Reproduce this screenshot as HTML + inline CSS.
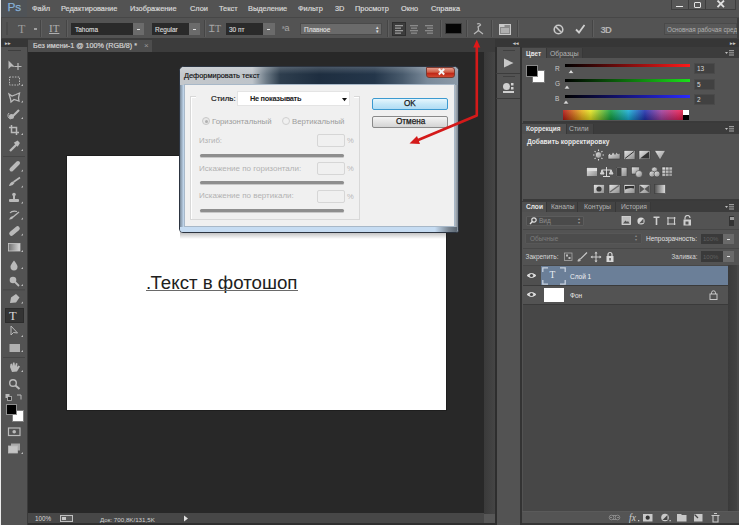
<!DOCTYPE html>
<html><head><meta charset="utf-8">
<style>
*{margin:0;padding:0;box-sizing:border-box}
html,body{width:739px;height:525px;overflow:hidden;background:#535353;font-family:"Liberation Sans",sans-serif}
.a{position:absolute}
.t{position:absolute;white-space:nowrap;line-height:1}
.mn{color:#d8d8d8;font-size:7.4px;top:5px;-webkit-text-stroke:0.2px #d8d8d8}
.sep{position:absolute;top:20px;width:2px;height:17px;border-left:1px solid #454545;border-right:1px solid #5e5e5e}
.box{position:absolute;top:23px;height:12px;background:#2a2a2a}
.btn{position:absolute;top:23px;height:12px;width:11px;background:#6b6b6b}
.btn:after{content:"";position:absolute;left:4px;top:6px;width:3px;height:1px;background:#e0e0e0}
.ot{color:#d8d8d8;font-size:6.5px;top:27px;-webkit-text-stroke:0.15px #d8d8d8}
.ic{position:absolute}
</style></head><body>
<!-- left edge -->
<div class="a" style="left:0;top:0;width:1px;height:525px;background:#ececec"></div>
<!-- menu bar -->
<div class="a" style="left:1px;top:0;width:738px;height:17px;background:#535353"></div>
<div class="a" style="left:1px;top:0;width:26px;height:17px;background:#4f5357"></div>
<div class="t" style="left:7.5px;top:1.5px;font-size:11.8px;color:#86b0d8;-webkit-text-stroke:0.25px #86b0d8;letter-spacing:0px">Ps</div>
<div class="t mn" style="left:32px">Файл</div>
<div class="t mn" style="left:61px">Редактирование</div>
<div class="t mn" style="left:130px">Изображение</div>
<div class="t mn" style="left:190px">Слои</div>
<div class="t mn" style="left:219px">Текст</div>
<div class="t mn" style="left:248px">Выделение</div>
<div class="t mn" style="left:298px">Фильтр</div>
<div class="t mn" style="left:335px">3D</div>
<div class="t mn" style="left:355px">Просмотр</div>
<div class="t mn" style="left:401px">Окно</div>
<div class="t mn" style="left:431px">Справка</div>
<!-- window buttons -->
<div class="a" style="left:671px;top:0;width:65px;height:9.5px;background:#575757;border:1px solid #3e3e3e;border-top:0"></div>
<div class="a" style="left:688px;top:0;width:1px;height:9px;background:#3e3e3e"></div>
<div class="a" style="left:705px;top:0;width:1px;height:9px;background:#3e3e3e"></div>
<div class="a" style="left:676px;top:5.5px;width:7px;height:1.8px;background:#e8e8e8"></div>
<div class="a" style="left:694px;top:2px;width:7px;height:5.5px;border:1.6px solid #e4e4e4;border-radius:1px"></div>
<svg class="ic" style="left:716px;top:0" width="10" height="9"><path d="M1.5 0.5 L8 7.2 M8 0.5 L1.5 7.2" stroke="#e0e0e0" stroke-width="1.8"/></svg>
<!-- options bar -->
<div class="a" style="left:1px;top:17px;width:738px;height:22px;background:#535353;border-top:1px solid #474747;border-bottom:1px solid #3c3c3c;border-left:1px solid #474747"></div>
<div class="a" style="left:6px;top:22px;width:2px;height:13px;background:#4a4a4a"></div>
<div class="t" style="left:18px;top:23px;font-family:'Liberation Serif';font-size:12px;color:#9c9c9c">T</div>
<div class="a" style="left:34px;top:28px;width:3px;height:1.5px;background:#a0a0a0"></div>
<div class="sep" style="left:40px"></div>
<div class="t" style="left:49px;top:23px;font-family:'Liberation Serif';font-size:11px;color:#b0b0b0;text-decoration:underline">IT</div>
<div class="sep" style="left:66px"></div>
<div class="box" style="left:71px;width:62px"></div><div class="t ot" style="left:75px">Tahoma</div>
<div class="btn" style="left:133px"></div>
<div class="box" style="left:152px;width:37px"></div><div class="t ot" style="left:155px">Regular</div>
<div class="btn" style="left:189px"></div>
<div class="sep" style="left:204px"></div>
<div class="t" style="left:209px;top:24px;font-family:'Liberation Serif';font-size:10px;color:#a8a8a8">ꞮT</div>
<div class="box" style="left:226px;width:37px"></div><div class="t ot" style="left:229px">30 пт</div>
<div class="btn" style="left:263px;width:12px"></div>
<div class="t" style="left:282px;top:24px;font-size:7px;color:#a8a8a8">ª<span style="font-size:9px">a</span></div>
<div class="box" style="left:300px;width:82px;background:#6a6a6a;border:1px solid #4a4a4a"></div><div class="t ot" style="left:304px;color:#e0e0e0">Плавное</div>
<div class="t" style="left:376px;top:25px;font-size:5px;color:#e0e0e0;line-height:4px">▴<br>▾</div>
<div class="sep" style="left:387px"></div>
<div class="a" style="left:392px;top:22px;width:14px;height:14px;background:#3c3c3c;border:1px solid #2e2e2e"></div>
<svg class="ic" style="left:395px;top:25px" width="9" height="9"><g fill="#9a9a9a"><rect x="0" y="0" width="8" height="1.3"/><rect x="0" y="2.5" width="6" height="1.3"/><rect x="0" y="5" width="8" height="1.3"/><rect x="0" y="7.5" width="6" height="1.3"/></g></svg>
<svg class="ic" style="left:410px;top:25px" width="9" height="9"><g fill="#8a8a8a"><rect x="0" y="0" width="8" height="1.3"/><rect x="1" y="2.5" width="6" height="1.3"/><rect x="0" y="5" width="8" height="1.3"/><rect x="1" y="7.5" width="6" height="1.3"/></g></svg>
<svg class="ic" style="left:425px;top:25px" width="9" height="9"><g fill="#8a8a8a"><rect x="0" y="0" width="8" height="1.3"/><rect x="2" y="2.5" width="6" height="1.3"/><rect x="0" y="5" width="8" height="1.3"/><rect x="2" y="7.5" width="6" height="1.3"/></g></svg>
<div class="sep" style="left:440px"></div>
<div class="a" style="left:445px;top:23px;width:17px;height:11px;background:#050505;border:1px solid #3c3c3c"></div>
<div class="sep" style="left:466px"></div>
<svg class="ic" style="left:473px;top:23px" width="11" height="12"><path d="M4 1 Q7 0 7.5 2 L5 4 Q6 6 5 8" stroke="#b8b8b8" stroke-width="1.3" fill="none"/><path d="M1 11 L5.5 7.5 L10 11" stroke="#b8b8b8" stroke-width="1.2" fill="none"/></svg>
<div class="sep" style="left:491px"></div>
<svg class="ic" style="left:499px;top:24px" width="12" height="11"><rect x="0.5" y="0.5" width="11" height="10" fill="#8a8a8a" stroke="#c8c8c8"/><rect x="0.5" y="0.5" width="5" height="2.5" fill="#c8c8c8"/><rect x="2" y="4" width="8" height="5" fill="#b0b0b0"/></svg>
<div class="sep" style="left:517px"></div>
<svg class="ic" style="left:553px;top:24px" width="11" height="11"><circle cx="5.5" cy="5.5" r="4.3" stroke="#c8c8c8" stroke-width="1.6" fill="none"/><path d="M2.5 2.5 L8.5 8.5" stroke="#c8c8c8" stroke-width="1.6"/></svg>
<svg class="ic" style="left:575px;top:24px" width="10" height="10"><path d="M1 5.5 L4 8.5 L9.5 1" stroke="#d0d0d0" stroke-width="1.8" fill="none"/></svg>
<div class="sep" style="left:592px"></div>
<div class="t" style="left:600.5px;top:24.5px;font-size:9.5px;font-weight:bold;color:#b4b4b4;letter-spacing:-0.8px">3D</div>
<div class="a" style="left:664px;top:23px;width:73px;height:12px;background:#585858;border:1px solid #4a4a4a"></div>
<div class="t" style="left:667px;top:26.5px;font-size:6.3px;color:#b0b0b0">Основная рабочая сред</div>
<div class="a" style="left:737px;top:18px;width:2px;height:29px;background:#3e3e3e"></div>
<!-- doc tab bar -->
<div class="a" style="left:28px;top:39px;width:467px;height:13px;background:#3c3c3c"></div>
<div class="a" style="left:28px;top:40px;width:124px;height:12px;background:#4d4d4d"></div>
<div class="t" style="left:33px;top:42px;font-size:7.2px;color:#d4d4d4;-webkit-text-stroke:0.2px #d4d4d4">Без имени-1 @ 100% (RGB/8) *</div>
<div class="t" style="left:144px;top:42px;font-size:8px;color:#9a9a9a">×</div>
<!-- doc area -->
<div class="a" style="left:28px;top:52px;width:456px;height:462px;background:#282828"></div>
<!-- status bar -->
<div class="a" style="left:28px;top:513px;width:456px;height:10px;background:#474747"></div>
<div class="a" style="left:28px;top:523px;width:467px;height:2px;background:#2f2f2f"></div>
<div class="t" style="left:35px;top:516px;font-size:6.3px;color:#d8d8d8">100%</div>
<div class="a" style="left:60px;top:515px;width:13px;height:7px;border:1px solid #c0c0c0;background:#5a5a5a"></div>
<div class="a" style="left:62px;top:517px;width:4px;height:3px;background:#c8c8c8"></div>
<div class="t" style="left:100px;top:516.5px;font-size:6.2px;color:#d0d0d0">Док: 700,8K/131,5K</div>
<svg class="ic" style="left:183px;top:515px" width="6" height="7"><path d="M1 0.5 L5 3.5 L1 6.5Z" fill="#e0e0e0"/></svg>
<!-- scroll strip -->
<div class="a" style="left:484px;top:52px;width:11px;height:462px;background:linear-gradient(90deg,#3a3a3a,#454545)"></div>
<div class="a" style="left:484px;top:514px;width:11px;height:9px;background:#575757"></div>
<div class="a" style="left:495px;top:39px;width:2px;height:486px;background:#2e2e2e"></div>
<!-- toolbar -->
<div class="a" style="left:1px;top:39px;width:27px;height:486px;background:#535353;border-right:1px solid #3a3a3a"></div>
<div class="a" style="left:1px;top:39px;width:27px;height:8px;background:#363636"></div>
<div class="t" style="left:4.5px;top:41px;font-size:5px;color:#c8c8c8;font-weight:bold">▸▸</div>
<div class="a" style="left:8px;top:50px;width:13px;height:1px;background:#3e3e3e"></div>
<svg class="ic" style="left:0;top:0" width="28" height="470">
<g fill="#bababa" stroke="#bababa">
<!-- move -->
<path d="M8.5 60.5 L8.5 69 L11 66.5 L15 67 Z" stroke="none"/>
<path d="M18 63 V70 M14.5 66.5 H21.5" stroke-width="1.2" fill="none"/>
<!-- marquee -->
<rect x="9.5" y="77" width="10" height="8" fill="none" stroke-width="1" stroke-dasharray="1.5 1.2"/>
<!-- lasso -->
<path d="M9 94 L12 96 L16 94.5 L19.5 93 L18.5 98 L19 101 L14 99.5 L11 102 L10.5 99 Z" stroke-width="1.3" fill="none"/>
<!-- quick select -->
<path d="M19 110 L13 116" stroke-width="2.2"/>
<circle cx="11.5" cy="116.5" r="2.5" stroke="none"/>
<path d="M9 113 A3.5 3.5 0 0 0 11 119" fill="none" stroke-width="1"/>
<!-- crop -->
<path d="M11.5 125 V132.5 H19 M9 127.5 H16.5 V135" fill="none" stroke-width="1.5"/>
<!-- eyedropper -->
<path d="M10 151 L16.5 144.5" stroke-width="2.3"/>
<path d="M15 143 L17.5 141.5 L19 143 L17.5 145.5 Z" stroke-width="1.5"/>
<!-- sep -->
<rect x="3" y="156" width="22" height="0.8" fill="#434343" stroke="none"/>
<!-- healing -->
<path d="M11.5 169.5 L18 163" stroke-width="4" stroke-linecap="round"/>
<!-- brush -->
<path d="M13.5 182 L20 177.5" stroke-width="1.6"/>
<path d="M9 186 Q10 182 13 181.5 L14.5 183 Q12.5 186.5 9 186Z" stroke="none"/>
<!-- stamp -->
<circle cx="14" cy="194.5" r="1.8" stroke="none"/>
<rect x="13" y="195" width="2" height="4" stroke="none"/>
<rect x="9" y="199" width="10" height="3" rx="1" stroke="none"/>
<!-- history brush -->
<path d="M10 213 Q12 210.5 17 211.5" fill="none" stroke-width="1.2"/>
<path d="M13 217 L19 212" stroke-width="1.3"/>
<path d="M9 219.5 Q10 216.5 12.5 216 L13.5 217.5 Q12 220 9 219.5Z" stroke="none"/>
<!-- eraser -->
<path d="M11.5 233.5 L17.5 228.5" stroke-width="4.5" stroke-linecap="round"/>
<defs><linearGradient id="tg" x1="0" y1="0" x2="1" y2="0"><stop offset="0" stop-color="#707070"/><stop offset="1" stop-color="#d8d8d8"/></linearGradient></defs>
<rect x="8.5" y="243.5" width="11.5" height="7.5" fill="url(#tg)" stroke="#c8c8c8" stroke-width="0.8"/>
<!-- drop -->
<path d="M14 260.5 Q10 265.5 10.5 267 A3.5 3.5 0 0 0 17.5 267 Q18 265.5 14 260.5Z" stroke="none"/>
<!-- dodge -->
<circle cx="13" cy="280" r="3.3" stroke="none"/>
<path d="M15 282 L19 286" stroke-width="1.8"/>
<rect x="3" y="289.5" width="22" height="0.8" fill="#434343" stroke="none"/>
<!-- pen -->
<path d="M10 303 L11 297.5 L16 294 L19.5 297.5 L16 302.5 Z" stroke="none"/>
<!-- path select -->
<path d="M11 326 L11 335 L13.5 332.5 L17.5 333 Z" fill="none" stroke-width="1"/>
<!-- rect -->
<rect x="9.5" y="344" width="10.5" height="8" stroke="none" fill="#b0b0b0"/>
<rect x="3" y="357" width="22" height="0.8" fill="#434343" stroke="none"/>
<!-- hand -->
<path d="M10 367 L10.5 364 L12 363.5 L12.5 366 L13 362.5 L14.5 362.5 L15 366 L16 363 L17.5 363.5 L17 367 L18.5 365.5 L20 366.5 L17 371.5 L12 372 Z" stroke="none"/>
<!-- zoom -->
<circle cx="13" cy="383" r="3.3" stroke-width="1.4" fill="none"/>
<path d="M15.5 385.5 L19.5 389" stroke-width="2"/>
<!-- default colors -->
<rect x="5.5" y="394" width="4" height="4" stroke="none"/>
<rect x="7.5" y="396.5" width="4" height="4" fill="#333" stroke-width="0.8"/>
<path d="M17 395 H21 V399.5" fill="none" stroke-width="1"/>
<!-- quick mask -->
<rect x="8.5" y="428" width="11.5" height="7.5" fill="none" stroke-width="1.2"/>
<circle cx="14.2" cy="431.7" r="1.8" stroke="none"/>
<!-- screen mode -->
<rect x="11" y="443.5" width="9" height="7" stroke="none" fill="#a8a8a8"/>
<rect x="8.5" y="446" width="9" height="7" stroke-width="0.8" fill="#c4c4c4"/>
</g>
<g fill="#bdbdbd">
<path d="M21 86 L23 84 L23 86Z"/><path d="M21 102.5 L23 100.5 L23 102.5Z"/><path d="M21 119 L23 117 L23 119Z"/><path d="M21 135 L23 133 L23 135Z"/><path d="M21 151 L23 149 L23 151Z"/>
<path d="M21 171.5 L23 169.5 L23 171.5Z"/><path d="M21 187.5 L23 185.5 L23 187.5Z"/><path d="M21 203.5 L23 201.5 L23 203.5Z"/><path d="M21 219.5 L23 217.5 L23 219.5Z"/><path d="M21 235.5 L23 233.5 L23 235.5Z"/><path d="M21 252 L23 250 L23 252Z"/><path d="M21 269 L23 267 L23 269Z"/><path d="M21 286 L23 284 L23 286Z"/><path d="M21 303.5 L23 301.5 L23 303.5Z"/><path d="M21 320 L23 318 L23 320Z"/><path d="M21 337 L23 335 L23 337Z"/><path d="M21 352 L23 350 L23 352Z"/><path d="M21 372 L23 370 L23 372Z"/><path d="M21 454 L23 452 L23 454Z"/>
</g>
</svg>
<div class="a" style="left:5px;top:308px;width:19px;height:15px;background:#343434;border:1px solid #2c2c2c"></div>
<div class="t" style="left:9px;top:310px;font-family:'Liberation Serif';font-size:12.5px;color:#d8d8d8">T</div>
<div class="a" style="left:11.5px;top:410px;width:12px;height:11.5px;background:#fff;border:1px solid #808080"></div>
<div class="a" style="left:6px;top:404px;width:11px;height:10.5px;background:#000;border:1px solid #909090"></div>

<!-- mini dock -->
<div class="a" style="left:497px;top:39px;width:23px;height:486px;background:#535353"></div>
<div class="a" style="left:495px;top:39px;width:244px;height:8px;background:#363636"></div>
<div class="t" style="left:512.5px;top:41px;font-size:5px;color:#c8c8c8;font-weight:bold">◂◂</div>
<div class="t" style="left:730px;top:41px;font-size:5px;color:#c8c8c8;font-weight:bold">▸▸</div>
<div class="a" style="left:496px;top:73px;width:25px;height:1px;background:#3c3c3c"></div>
<div class="a" style="left:496px;top:98px;width:25px;height:1px;background:#3c3c3c"></div>
<div class="a" style="left:503px;top:50px;width:12px;height:1px;background:#404040"></div>
<div class="a" style="left:503px;top:76px;width:12px;height:1px;background:#404040"></div>
<svg class="ic" style="left:502px;top:57px" width="14" height="12"><path d="M2 1.5 L11.5 6 L2 10.5Z" fill="#c8c8c8"/></svg>
<svg class="ic" style="left:502px;top:82px" width="14" height="12"><circle cx="4.5" cy="4.5" r="3.5" fill="#d0d0d0"/><rect x="9" y="1" width="2.5" height="2.5" fill="#d0d0d0"/><rect x="9" y="5" width="2.5" height="2.5" fill="#d0d0d0"/><rect x="1" y="9" width="11" height="2" fill="#d0d0d0"/></svg>
<!-- main panels -->
<div class="a" style="left:520px;top:47px;width:219px;height:478px;background:#535353;border-left:2px solid #333"></div>
<!-- color panel -->
<div class="a" style="left:522px;top:47px;width:217px;height:11px;background:#3c3c3c"></div>
<div class="a" style="left:522px;top:47.5px;width:24px;height:10.5px;background:#505050"></div>
<div class="a" style="left:546px;top:47.5px;width:37px;height:10.5px;background:#444;border-left:1px solid #383838;border-right:1px solid #383838"></div>
<div class="t" style="left:526px;top:50.8px;font-size:6.4px;font-weight:bold;color:#e6e6e6">Цвет</div>
<div class="t" style="left:550px;top:50.8px;font-size:6.8px;color:#b4b4b4">Образцы</div>
<svg class="ic" style="left:725px;top:50px" width="10" height="6"><path d="M0 2 L3 2 L1.5 4Z" fill="#c0c0c0"/><g fill="#9a9a9a"><rect x="4" y="0" width="5" height="1.2"/><rect x="4" y="2.2" width="5" height="1.2"/><rect x="4" y="4.4" width="5" height="1.2"/></g></svg>
<div class="a" style="left:532px;top:70px;width:13px;height:13px;background:#fff;border:1px solid #777"></div>
<div class="a" style="left:525.5px;top:65px;width:12.5px;height:11.5px;background:#000;border:1px solid #8a8a8a"></div>
<div class="t" style="left:555px;top:66px;font-size:6.5px;color:#c8c8c8">R</div>
<div class="t" style="left:555px;top:81px;font-size:6.5px;color:#c8c8c8">G</div>
<div class="t" style="left:555px;top:96px;font-size:6.5px;color:#c8c8c8">B</div>
<div class="a" style="left:565px;top:64px;width:125px;height:3px;background:linear-gradient(90deg,#000,#ff1a1a)"></div>
<div class="a" style="left:565px;top:79px;width:125px;height:3px;background:linear-gradient(90deg,#000,#1ae01a)"></div>
<div class="a" style="left:565px;top:94.5px;width:125px;height:3px;background:linear-gradient(90deg,#000,#2a2aff)"></div>
<svg class="ic" style="left:560px;top:68px" width="20" height="40"><g fill="#d8d8d8" stroke="#404040" stroke-width="0.6"><path d="M11 1.5 L14 5.5 L8 5.5Z"/><path d="M7 17 L10 21 L4 21Z"/><path d="M6 32 L9 36 L3 36Z"/></g></svg>
<div class="a" style="left:694px;top:63px;width:21px;height:11px;background:#414141;border:1px solid #4a4a4a"></div>
<div class="a" style="left:694px;top:78.5px;width:21px;height:11px;background:#414141;border:1px solid #4a4a4a"></div>
<div class="a" style="left:694px;top:94px;width:21px;height:11px;background:#414141;border:1px solid #4a4a4a"></div>
<div class="t" style="left:697px;top:66px;font-size:6.5px;color:#d8d8d8">13</div>
<div class="t" style="left:697px;top:81.5px;font-size:6.5px;color:#d8d8d8">5</div>
<div class="t" style="left:697px;top:97px;font-size:6.5px;color:#d8d8d8">2</div>
<div class="a" style="left:563px;top:110px;width:126px;height:10px;background:linear-gradient(90deg,#b81414 0%,#e8b018 15%,#e8e820 22%,#10a040 38%,#18b0d8 52%,#2030b0 65%,#a040a0 78%,#e8205a 92%,#c01818 100%)"></div>
<div class="a" style="left:563px;top:110px;width:126px;height:10px;background:linear-gradient(#ffffff20,#00000040)"></div>
<div class="a" style="left:683px;top:110px;width:6px;height:5px;background:#fff"></div>
<div class="a" style="left:683px;top:115px;width:6px;height:5px;background:#000"></div>
<div class="a" style="left:523px;top:121px;width:216px;height:2px;background:#3a3a3a"></div>
<!-- adjustments panel -->
<div class="a" style="left:522px;top:123px;width:217px;height:11px;background:#3c3c3c"></div>
<div class="a" style="left:522px;top:123.5px;width:44px;height:10.5px;background:#505050"></div>
<div class="a" style="left:566px;top:123.5px;width:28px;height:10.5px;background:#444;border-left:1px solid #383838;border-right:1px solid #383838"></div>
<div class="t" style="left:526px;top:126px;font-size:6.5px;font-weight:bold;color:#e6e6e6">Коррекция</div>
<div class="t" style="left:569px;top:126px;font-size:6.8px;color:#b4b4b4">Стили</div>
<svg class="ic" style="left:725px;top:126px" width="10" height="6"><path d="M0 2 L3 2 L1.5 4Z" fill="#c0c0c0"/><g fill="#9a9a9a"><rect x="4" y="0" width="5" height="1.2"/><rect x="4" y="2.2" width="5" height="1.2"/><rect x="4" y="4.4" width="5" height="1.2"/></g></svg>
<div class="t" style="left:527px;top:139px;font-size:6.6px;font-weight:bold;color:#e8e8e8">Добавить корректировку</div>
<svg class="ic" style="left:580px;top:145px" width="100" height="52">
<defs><linearGradient id="gg" x1="0" y1="0" x2="1" y2="1"><stop offset="0" stop-color="#e8e8e8"/><stop offset="1" stop-color="#8a8a8a"/></linearGradient>
<linearGradient id="gh" x1="0" y1="0" x2="1" y2="0"><stop offset="0" stop-color="#505050"/><stop offset="1" stop-color="#e0e0e0"/></linearGradient></defs>
<g fill="url(#gg)" stroke="#3e3e3e" stroke-width="0.6">
<!-- row1 -->
<circle cx="18.5" cy="10" r="3.2"/>
<g stroke="#d8d8d8" stroke-width="1.1"><path d="M18.5 4.5V6M18.5 14V15.5M13 10H14.5M22.5 10H24M14.6 6.1L15.6 7.1M21.4 12.9L22.4 13.9M14.6 13.9L15.6 12.9M21.4 7.1L22.4 6.1"/></g>
<path d="M28 14 L28 10 L30 8 L31 10 L33 7 L35 9.5 L36.5 7 L38 9 L40 8 L40 14Z"/>
<rect x="44" y="5.5" width="11" height="9"/><path d="M45 13.5 L54 6.5" stroke="#333" stroke-width="1"/>
<rect x="59" y="5.5" width="11" height="9"/><path d="M60 13.5 L69 6.5 L69 13.5Z" fill="#333" stroke="none"/>
<path d="M74.5 5.5 L85.5 5.5 L80 15Z"/>
<!-- row2 -->
<rect x="6.5" y="22.5" width="11" height="9"/><rect x="7" y="23" width="10" height="3" fill="#dedede" stroke="none"/>
<path d="M26.5 22 V31 M21.5 25 H31.5 M22 25 L20.5 29 H24 Z M31 25 L29.5 29 H33 Z M23 31.5 H30" stroke="#d8d8d8" stroke-width="1" fill="#c8c8c8"/>
<rect x="36.5" y="22.5" width="10.5" height="9"/><rect x="37" y="23" width="4.5" height="8" fill="#404040" stroke="none"/>
<rect x="51.5" y="22" width="8" height="7"/><circle cx="59" cy="29" r="3.5"/>
<circle cx="74.5" cy="25" r="3"/><circle cx="72" cy="29" r="3"/><circle cx="77" cy="29" r="3"/>
<rect x="82" y="22" width="10.5" height="9.5"/><path d="M85.5 22V31.5M89 22V31.5M82 25.2H92.5M82 28.4H92.5" stroke="#555" stroke-width="0.7"/>
<!-- row3 -->
<rect x="13.5" y="39.5" width="11" height="9"/><circle cx="19" cy="44" r="2.6" fill="#3a3a3a" stroke="none"/>
<rect x="29" y="39.5" width="11" height="9"/><path d="M30 47 L39 40.5" stroke="#6a6a6a" stroke-width="1.5"/>
<rect x="44" y="39.5" width="11" height="9"/><path d="M45 44.5 Q50 42 54 43.5 L54 41 L45 41Z" fill="#333" stroke="none"/>
<rect x="59" y="39.5" width="11" height="9"/><path d="M59.5 40 L64.5 44 L59.5 48Z M69.5 40 L64.5 44 L69.5 48Z" fill="#555" stroke="none"/>
<rect x="74.5" y="39.5" width="11" height="9" fill="url(#gh)"/>
</g>
</svg>
<div class="a" style="left:523px;top:199px;width:216px;height:2px;background:#3a3a3a"></div>
<!-- layers panel -->
<div class="a" style="left:522px;top:201px;width:217px;height:11px;background:#3c3c3c"></div>
<div class="a" style="left:522px;top:201.5px;width:24px;height:10.5px;background:#505050"></div>
<div class="a" style="left:546px;top:201.5px;width:32px;height:10.5px;background:#444;border-left:1px solid #383838;border-right:1px solid #383838"></div>
<div class="a" style="left:578px;top:201.5px;width:38px;height:10.5px;background:#444;border-right:1px solid #383838"></div>
<div class="a" style="left:616px;top:201.5px;width:35px;height:10.5px;background:#444;border-right:1px solid #383838"></div>
<div class="t" style="left:526px;top:204px;font-size:6.6px;font-weight:bold;color:#e6e6e6">Слои</div>
<div class="t" style="left:551px;top:204px;font-size:6.6px;color:#b4b4b4">Каналы</div>
<div class="t" style="left:584px;top:204px;font-size:6.9px;color:#b4b4b4">Контуры</div>
<div class="t" style="left:621px;top:204px;font-size:6.7px;color:#b4b4b4">История</div>
<svg class="ic" style="left:725px;top:204px" width="10" height="6"><path d="M0 2 L3 2 L1.5 4Z" fill="#c0c0c0"/><g fill="#9a9a9a"><rect x="4" y="0" width="5" height="1.2"/><rect x="4" y="2.2" width="5" height="1.2"/><rect x="4" y="4.4" width="5" height="1.2"/></g></svg>
<!-- LAYERS BODY -->
<div class="a" style="left:526px;top:216px;width:58px;height:10px;background:#4a4a4a;border:1px solid #5c5c5c;border-radius:1px"></div>
<svg class="ic" style="left:529px;top:217px" width="8" height="8"><circle cx="5" cy="3" r="2.2" stroke="#e0e0e0" stroke-width="1.2" fill="none"/><path d="M3.4 4.6 L1 7" stroke="#e0e0e0" stroke-width="1.4"/></svg>
<div class="t" style="left:539px;top:218px;font-size:6.5px;color:#8e8e8e">Вид</div>
<div class="t" style="left:578px;top:217px;font-size:4px;color:#9a9a9a;line-height:3.5px">▴<br>▾</div>
<svg class="ic" style="left:620px;top:215px" width="75" height="12">
<g fill="#cfcfcf">
<rect x="2" y="1.5" width="8.5" height="8" fill="#bdbdbd" stroke="#dcdcdc" stroke-width="0.8"/><path d="M3 8.5 L5.5 5.5 L7 7 L8 6 L9.5 8.5Z" fill="#555"/>
<circle cx="21" cy="6" r="3.6" fill="#d8d8d8"/><path d="M19 8.5 L23.5 3.5 L23.5 8Z" fill="#555"/>
<path d="M33.5 1.5 H39.5 V3 H37.3 V10 H35.7 V3 H33.5Z"/>
<path d="M48 2 V10 M54.5 2 V10 M47 3 H55.5 M47 9 H55.5" stroke="#cfcfcf" stroke-width="1.1" fill="none"/>
<rect x="63.5" y="4.5" width="7.5" height="6"/><path d="M65 4.5 V3 A2.5 2.5 0 0 1 70 3" stroke="#cfcfcf" stroke-width="1.2" fill="none"/><rect x="65.5" y="6.5" width="3" height="3" fill="#555"/>
</g></svg>
<div class="a" style="left:729px;top:216px;width:5px;height:10px;background:#333"></div>
<div class="a" style="left:729.5px;top:216.5px;width:4px;height:3.5px;background:#9a9a9a"></div>
<div class="a" style="left:523px;top:229px;width:216px;height:1px;background:#474747"></div>
<div class="a" style="left:525px;top:233px;width:117px;height:11px;background:#4c4c4c;border:1px solid #575757;border-radius:1px"></div>
<div class="t" style="left:530px;top:236px;font-size:6.4px;color:#7e7e7e">Обычные</div>
<div class="t" style="left:635px;top:234px;font-size:4px;color:#8a8a8a;line-height:3.5px">▴<br>▾</div>
<div class="t" style="left:646px;top:236px;font-size:6.5px;color:#e2e2e2">Непрозрачность:</div>
<div class="a" style="left:700.5px;top:233.5px;width:22px;height:10px;background:#3a3a3a"></div>
<div class="t" style="left:703px;top:236px;font-size:6px;color:#606060">100%</div>
<div class="a" style="left:722.5px;top:233.5px;width:11.5px;height:10px;background:#6a6a6a"></div>
<div class="a" style="left:726.5px;top:238.5px;width:3.5px;height:1.2px;background:#e0e0e0"></div>
<div class="a" style="left:523px;top:248px;width:216px;height:1px;background:#474747"></div>
<div class="t" style="left:525.5px;top:254px;font-size:6.5px;color:#d6d6d6">Закрепить:</div>
<svg class="ic" style="left:563px;top:251px" width="52" height="12">
<g fill="#bdbdbd">
<rect x="1.5" y="2" width="7.5" height="7.5" fill="none" stroke="#a8a8a8" stroke-width="0.8"/><rect x="3" y="3.5" width="2" height="2"/><rect x="5.5" y="6" width="2" height="2"/>
<path d="M15 10 Q16 7.5 18 7.5 L24 1.5" stroke="#c8c8c8" stroke-width="1.2" fill="none"/><path d="M14.5 10.5 Q15 8 17 8 L18 9 Q17 11 14.5 10.5Z"/>
<path d="M33 1 V11 M28 6 H38" stroke="#c8c8c8" stroke-width="1.1"/><path d="M33 0.5 L31.5 2.5 H34.5Z M33 11.5 L31.5 9.5 H34.5Z M27.5 6 L29.5 4.5 V7.5Z M38.5 6 L36.5 4.5 V7.5Z" fill="#c8c8c8"/>
<rect x="43.5" y="5" width="7" height="6" fill="#d8d8d8"/><path d="M45 5 V3.5 A2 2 0 0 1 49 3.5 V5" stroke="#d8d8d8" stroke-width="1.2" fill="none"/><rect x="46.3" y="7" width="1.5" height="2.5" fill="#555"/>
</g></svg>
<div class="t" style="left:671.5px;top:254px;font-size:6.3px;color:#d6d6d6">Заливка:</div>
<div class="a" style="left:700.5px;top:251px;width:22px;height:10.5px;background:#3a3a3a"></div>
<div class="t" style="left:703px;top:254px;font-size:6px;color:#606060">100%</div>
<div class="a" style="left:722.5px;top:251px;width:11.5px;height:10.5px;background:#6a6a6a"></div>
<div class="a" style="left:726.5px;top:256px;width:3.5px;height:1.2px;background:#e0e0e0"></div>
<!-- layer list -->
<div class="a" style="left:523px;top:265px;width:205px;height:246px;background:#474747"></div>
<div class="a" style="left:728px;top:265px;width:9px;height:246px;background:linear-gradient(90deg,#3a3a3a,#424242)"></div>
<div class="a" style="left:737px;top:265px;width:2px;height:246px;background:#484848"></div>
<div class="a" style="left:523px;top:265.5px;width:17.5px;height:20px;background:#4f4f4f;border-bottom:1px solid #3a3a3a"></div>
<div class="a" style="left:540.5px;top:265.5px;width:187px;height:20px;background:#6b7f98;border-bottom:1px solid #3a3a3a"></div>
<div class="a" style="left:523px;top:285.5px;width:205px;height:19.5px;background:#535353;border-bottom:1px solid #3a3a3a"></div>
<svg class="ic" style="left:526px;top:272px" width="11" height="30"><g fill="#d8d8d8" stroke="#e0e0e0" stroke-width="0.9"><path d="M1 3.5 Q5.5 -0.5 10 3.5 Q5.5 7.5 1 3.5Z"/><path d="M1 22.5 Q5.5 18.5 10 22.5 Q5.5 26.5 1 22.5Z"/></g><circle cx="5.5" cy="3.5" r="1.6" fill="#444"/><circle cx="5.5" cy="22.5" r="1.6" fill="#444"/></svg>
<div class="a" style="left:542.5px;top:267.5px;width:23px;height:16.5px;background:#6b7f98"></div>
<svg class="ic" style="left:542px;top:267px" width="24" height="18"><g fill="none" stroke="#c8d2de" stroke-width="1.3"><path d="M0.8 5 V0.8 H6 M18 0.8 H23.2 V5 M23.2 13 V17.2 H18 M6 17.2 H0.8 V13"/></g></svg>
<div class="t" style="left:549.5px;top:270.5px;font-family:'Liberation Serif';font-size:9.5px;color:#e8eef4">T</div>
<div class="t" style="left:570px;top:274px;font-size:6.5px;color:#f2f2f2">Слой 1</div>
<div class="a" style="left:544px;top:288px;width:20px;height:13.5px;background:#fff"></div>
<div class="t" style="left:570px;top:292.5px;font-size:6.5px;color:#e6e6e6">Фон</div>
<svg class="ic" style="left:709px;top:290px" width="9" height="10"><rect x="1" y="4" width="7" height="5.5" fill="none" stroke="#c8c8c8" stroke-width="1"/><path d="M2.5 4 V2.8 A2 2 0 0 1 6.5 2.8 V4" stroke="#c8c8c8" stroke-width="1" fill="none"/></svg>
<!-- layers bottom bar -->
<div class="a" style="left:522px;top:511px;width:217px;height:12px;background:#545454;border-top:1px solid #5a5a5a"></div>
<div class="a" style="left:522px;top:523px;width:217px;height:2px;background:#363636"></div>
<svg class="ic" style="left:608px;top:512px" width="115" height="11">
<g fill="#c8c8c8">
<path d="M2 5.5 H4 M9 5.5 H11 M4.5 3.5 H8.5 M4.5 7.5 H8.5" stroke="#8a8a8a" stroke-width="1.2"/><circle cx="3.5" cy="5.5" r="2.3" fill="none" stroke="#8a8a8a" stroke-width="1"/><circle cx="9.5" cy="5.5" r="2.3" fill="none" stroke="#8a8a8a" stroke-width="1"/>
<text x="21" y="9" font-family="Liberation Serif" font-style="italic" font-size="9.5" fill="#d0d0d0">fx</text><rect x="30" y="8" width="1.3" height="1.3"/>
<rect x="35" y="2" width="9.5" height="7.5"/><circle cx="39.7" cy="5.7" r="2.1" fill="#333"/>
<circle cx="57" cy="5.5" r="3.8"/><path d="M54.5 8 L59.5 3 L59.5 8Z" fill="#444"/><rect x="61.5" y="8" width="1.3" height="1.3"/>
<path d="M69 2 H73 L74 3 H78.5 V9.5 H69Z"/>
<path d="M86 2 H94.5 V9.5 H86Z" /><path d="M86.5 2.5 L90 6" stroke="#444" stroke-width="1.2"/>
<path d="M103.5 3.5 H111.5 M105 3.5 V10 H110 V3.5 M106 1.5 H109" stroke="#c8c8c8" stroke-width="1.1" fill="none"/>
</g></svg>
<!-- canvas -->
<div class="a" style="left:67px;top:156px;width:379px;height:254px;background:#ffffff;box-shadow:0 0 0 1px #1e1e1e"></div>
<div class="t" style="left:146px;top:274.3px;font-size:18.7px;color:#202020">.</div>
<div class="t" style="left:150.5px;top:274.3px;font-size:18.7px;color:#202020">Текст в фотошоп</div>
<div class="a" style="left:146px;top:290px;width:152px;height:1px;background:#6a6a6a"></div>
<!-- DIALOG -->
<div class="a" style="left:180px;top:231px;width:266px;height:8px;background:linear-gradient(#b0b0b0,#ffffff00)"></div>
<div class="a" style="left:179px;top:66px;width:280px;height:167px;border:1px solid #2c3440;border-radius:5px 5px 3px 4px;background:#c6dcf2;overflow:hidden">
 <div class="a" style="left:0;top:0;width:278px;height:18px;background:linear-gradient(#ffffff30,#ffffff00 40%),linear-gradient(90deg,#c4c8cc 0%,#bec4ca 26%,#6e7c88 31%,#2e3e4e 36%,#1e2e40 50%,#24364a 70%,#485a6c 80%,#7a8a9a 89%,#8c9aa8 100%)"></div>
 <div class="a" style="left:0;top:18px;width:4px;height:148px;background:linear-gradient(90deg,#7a8a9a,#c8def4)"></div>
 <div class="a" style="left:275px;top:18px;width:4px;height:148px;background:linear-gradient(90deg,#b4bcc4,#6a747e)"></div>
 <div class="a" style="left:0;top:160px;width:277px;height:6px;background:linear-gradient(90deg,#c6dcf2 0%,#c6dcf2 92%,#7a8692 97%,#5a6570 100%)"></div>
</div>
<div class="t" style="left:184px;top:72px;font-size:7.4px;color:#101010;-webkit-text-stroke:0.15px #101010">Деформировать текст</div>
<div class="a" style="left:426px;top:67px;width:29px;height:11px;border-radius:0 3px 3px 3px;background:linear-gradient(#e49a8a,#d06048 45%,#c02818 60%,#d04830);border:1px solid #7a3a30"></div>
<svg class="ic" style="left:437px;top:68px" width="9" height="8"><path d="M1.8 1 L7.2 6.5 M7.2 1 L1.8 6.5" stroke="#f4f4f4" stroke-width="1.9"/></svg>
<div class="a" style="left:184px;top:84px;width:271px;height:143px;background:#f0f0f0;border:1px solid #a8b8c8"></div>
<!-- group box -->
<div class="a" style="left:190px;top:96px;width:170px;height:124px;border:1px solid #d8d8d8;box-shadow:inset 1px 1px 0 #fff"></div>
<div class="a" style="left:196px;top:92px;width:158px;height:8px;background:#f0f0f0"></div>
<div class="t" style="left:211px;top:95px;font-size:7.9px;color:#1a1a1a;-webkit-text-stroke:0.2px #1a1a1a">Стиль:</div>
<div class="a" style="left:237px;top:91px;width:113px;height:15px;background:#fff;border:1px solid #e4e4e4"></div>
<div class="t" style="left:250px;top:95px;font-size:7.4px;font-weight:bold;color:#222;letter-spacing:-0.3px">Не показывать</div>
<svg class="ic" style="left:342px;top:97.5px" width="5" height="4"><path d="M0 0 L5 0 L2.5 3.2Z" fill="#111"/></svg>
<!-- radios -->
<div class="a" style="left:202px;top:117px;width:8px;height:8px;border-radius:50%;border:1px solid #c8c8c8;background:#e8e8e8"></div>
<div class="a" style="left:204.5px;top:119.5px;width:3px;height:3px;border-radius:50%;background:#b0b0b0"></div>
<div class="t" style="left:212px;top:118px;font-size:7.8px;color:#9c9c9c">Горизонтальный</div>
<div class="a" style="left:282px;top:117px;width:8px;height:8px;border-radius:50%;border:1px solid #d0d0d0;background:#f0f0f0"></div>
<div class="t" style="left:292px;top:118px;font-size:7.8px;color:#9c9c9c">Вертикальный</div>
<!-- sliders -->
<div class="t" style="left:199px;top:137px;font-size:7.8px;color:#b2b2b2">Изгиб:</div>
<div class="a" style="left:317px;top:134px;width:28px;height:13px;border:1px solid #d6d6d6;border-radius:2px"></div>
<div class="t" style="left:347px;top:137px;font-size:7.6px;color:#b8b8b8">%</div>
<div class="a" style="left:200px;top:154px;width:144px;height:3px;background:#8e8e8e;border-radius:2px;box-shadow:0 1px 0 #c8c8c8"></div>
<div class="t" style="left:199px;top:165px;font-size:8px;color:#b2b2b2">Искажение по горизонтали:</div>
<div class="a" style="left:317px;top:162px;width:28px;height:13px;border:1px solid #d6d6d6;border-radius:2px"></div>
<div class="t" style="left:347px;top:165px;font-size:7.6px;color:#b8b8b8">%</div>
<div class="a" style="left:200px;top:181px;width:144px;height:3px;background:#8e8e8e;border-radius:2px;box-shadow:0 1px 0 #c8c8c8"></div>
<div class="t" style="left:199px;top:192px;font-size:8px;color:#b2b2b2">Искажение по вертикали:</div>
<div class="a" style="left:317px;top:190px;width:28px;height:13px;border:1px solid #d6d6d6;border-radius:2px"></div>
<div class="t" style="left:347px;top:193px;font-size:7.6px;color:#b8b8b8">%</div>
<div class="a" style="left:200px;top:209px;width:144px;height:3px;background:#8e8e8e;border-radius:2px;box-shadow:0 1px 0 #c8c8c8"></div>
<!-- buttons -->
<div class="a" style="left:372px;top:98px;width:76px;height:12px;border:1px solid #3c9ad0;border-radius:2px;background:linear-gradient(#e6f6fd,#c6e8f8 50%,#b0dcf4)"></div>
<div class="t" style="left:404px;top:100px;font-size:8.2px;color:#1a1a1a;-webkit-text-stroke:0.25px #1a1a1a">OK</div>
<div class="a" style="left:372px;top:116px;width:76px;height:12px;border:1px solid #8a8a8a;border-radius:2px;background:linear-gradient(#f4f4f4,#e4e4e4 50%,#d4d4d4)"></div>
<div class="t" style="left:396px;top:118px;font-size:8.2px;color:#1a1a1a;-webkit-text-stroke:0.25px #1a1a1a">Отмена</div>
<!-- ARROWS -->
<svg class="ic" style="left:0;top:0" width="739" height="525">
<path d="M476.8 46 L476.8 115.5 L417 140.5" stroke="#d41a1a" stroke-width="2.6" fill="none" stroke-linejoin="round"/>
<path d="M476.8 39.5 L473.3 47.5 L480.3 47.5Z" fill="#e01818"/>
<path d="M409.5 143.5 L417 136 L420 144Z" fill="#d41a1a"/>
</svg>
</body></html>
